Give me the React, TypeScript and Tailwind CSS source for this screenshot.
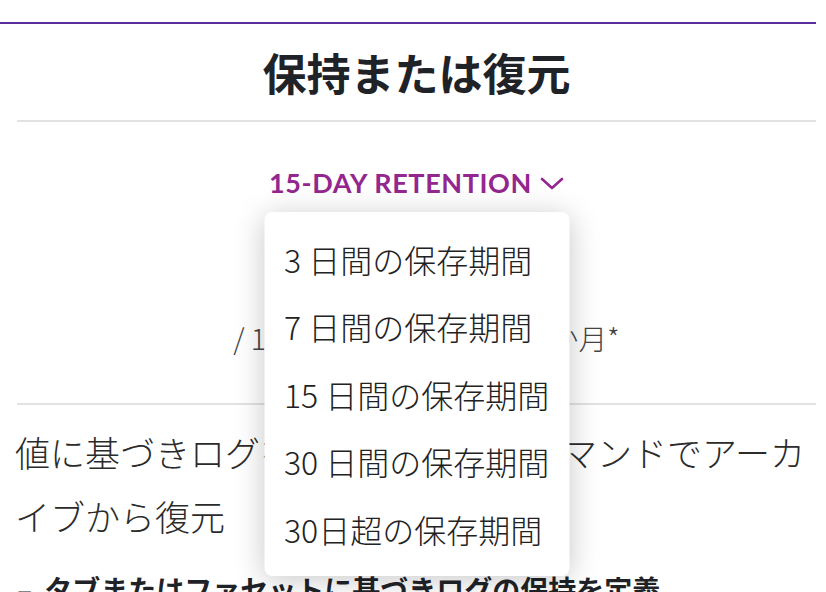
import React from "react";

const options = [
	"3 日間の保存期間",
	"7 日間の保存期間",
	"15 日間の保存期間",
	"30 日間の保存期間",
	"30日超の保存期間",
];

const jp = { fontFamily: '"Noto Sans CJK JP", "Noto Sans", sans-serif' };
const latin = { fontFamily: 'Lato, "Noto Sans CJK JP", sans-serif' };

const Chevron = () => (
	<svg width="24" height="14" viewBox="0 0 24 14" fill="none" className="ml-[8px] mt-[2px]">
		<path d="M2 2 L12 11 L22 2" stroke="#93278f" strokeWidth="2.6" strokeLinecap="round" strokeLinejoin="round" />
	</svg>
);

const RetentionMenu = () => (
	<div className="absolute left-1/2 top-[90px] z-10 w-[305px] -translate-x-1/2 rounded-[8px] bg-white py-[13px] shadow-[0_4px_30px_rgba(0,0,0,0.22)]">
		{options.map((o) => (
			<div
				key={o}
				className="flex h-[67.5px] items-center whitespace-nowrap pl-[20px] text-[32px] font-light text-[#222]"
				style={jp}>
				{o}
			</div>
		))}
	</div>
);

export default function App() {
	return (
		<div className="min-h-[592px] w-[826px] overflow-hidden bg-white" style={jp}>
			<div className="h-[22px]" />
			<div className="h-[2px] w-[816px] bg-[#5b2d9c]" />
			<div className="ml-[17px] w-[799px]">
				<h1 className="flex h-[96px] items-center justify-center text-[44px] font-bold text-[#1f2328]">
					保持または復元
				</h1>
				<div className="h-[2px] bg-[#e2e2e2]" />

				<div className="relative flex h-[281px] flex-col items-center">
					<button
						className="mt-[41px] flex items-center text-[27px] font-bold tracking-[0.6px] text-[#93278f]"
						style={latin}>
						15-DAY RETENTION
						<Chevron />
					</button>
					<div className="mt-[40px] text-[44px] font-light text-[#333]">$0.10</div>
					<div className="mt-[6px] pl-[20px] text-[28.7px] font-light text-[#444]">/ 100 万ログイベント / 1 か月*</div>
					<RetentionMenu />
				</div>

				<div className="h-[2px] bg-[#e2e2e2]" />
				<p className="-ml-[2px] mt-[15px] w-[803px] text-[35px] font-light leading-[64px] text-[#2b2b2b]">
					値に基づきログを保持し(または)コマンドでアーカイブから復元
				</p>
				<p className="mt-[21px] text-[28px] font-bold leading-[40px] text-[#1f2328]">
					<span className="mr-[12px]">–</span>タブまたはファセットに基づきログの保持を定義
				</p>
			</div>
		</div>
	);
}
